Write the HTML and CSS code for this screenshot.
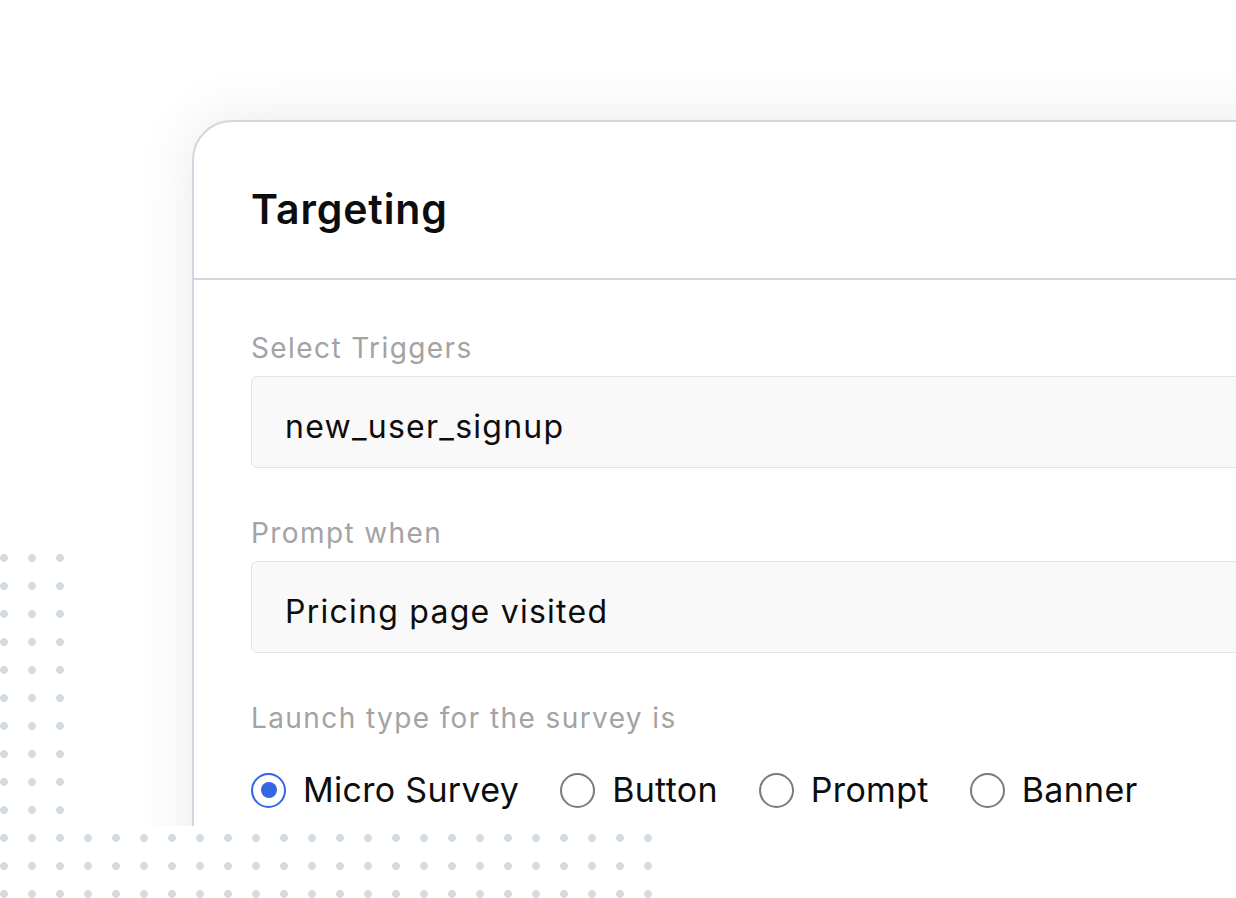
FILE: index.html
```html
<!DOCTYPE html>
<html lang="en">
<head>
<meta charset="utf-8">
<title>Targeting</title>
<link rel="stylesheet" href="styles.css">
</head>
<body>
<div class="stage">
  <div class="frame">
    <section class="card">
      <header class="card-head">
        <h1 class="title">Targeting</h1>
      </header>
      <div class="card-body">
        <div class="field">
          <div class="label">Select Triggers</div>
          <div class="input">new_user_signup</div>
        </div>
        <div class="field">
          <div class="label">Prompt when</div>
          <div class="input">Pricing page visited</div>
        </div>
        <div class="field">
          <div class="label">Launch type for the survey is</div>
          <div class="radios">
            <label class="radio"><span class="dot on"></span><span class="rtext">Micro Survey</span></label>
            <label class="radio"><span class="dot"></span><span class="rtext">Button</span></label>
            <label class="radio"><span class="dot"></span><span class="rtext">Prompt</span></label>
            <label class="radio"><span class="dot"></span><span class="rtext">Banner</span></label>
          </div>
        </div>
      </div>
    </section>
  </div>
  <div class="dots dots-left"></div>
  <div class="dots dots-bottom"></div>
</div>
</body>
</html>
```

FILE: styles.css
```css
* { box-sizing: border-box; }
html, body { margin: 0; padding: 0; background: #ffffff; }
body {
  font-family: Inter, "Noto Sans", "Liberation Sans", sans-serif;
  color: #111111;
  width: 1236px;
  height: 898px;
  overflow: hidden;
}
.stage { position: relative; width: 1236px; height: 898px; }
.frame {
  height: 826px;
  overflow: hidden;
  padding: 120px 0 0 192px;
}
.card {
  width: 1200px;
  height: 900px;
  background: #ffffff;
  border: 2px solid #d3d6e2;
  border-radius: 40px 0 0 0;
  box-shadow: 0 0 60px rgba(0, 0, 0, 0.09);
}
.card-head {
  height: 158px;
  border-bottom: 2px solid #d3d6e2;
  padding-left: 57px;
  display: flex;
  align-items: center;
}
.title {
  margin: 0;
  font-size: 41px;
  font-weight: 600;
  letter-spacing: 0.9px;
  color: #0d0d0d;
  padding-top: 18px;
}
.card-body {
  padding: 50px 0 0 57px;
  display: flex;
  flex-direction: column;
  gap: 47px;
}
.field { display: flex; flex-direction: column; gap: 10px; }
.label {
  font-size: 28px;
  line-height: 36px;
  letter-spacing: 1.4px;
  color: #a3a3a3;
}
.input {
  height: 92px;
  width: 1100px;
  background: #f9f9f9;
  border: 1px solid #e4e4e4;
  border-radius: 6px;
  padding: 8px 0 0 33px;
  display: flex;
  align-items: center;
  font-size: 32px;
  letter-spacing: 1.25px;
  color: #0d0d0d;
}
.radios {
  display: flex;
  align-items: center;
  gap: 41px;
  margin-top: 24px;
}
.radio {
  display: flex;
  align-items: center;
  gap: 17px;
  font-size: 34px;
  line-height: 40px;
  letter-spacing: 0.3px;
  color: #0d0d0d;
}
.dot {
  width: 35px;
  height: 35px;
  border-radius: 50%;
  border: 2px solid #7b7b7b;
  display: flex;
  align-items: center;
  justify-content: center;
  flex: none;
}
.dot.on { border-color: #3466df; }
.dot.on::after {
  content: "";
  width: 16px;
  height: 16px;
  border-radius: 50%;
  background: #3466df;
}
.dots {
  position: absolute;
  background-image: radial-gradient(circle at 14px 14px, #d3dbe3 3.6px, transparent 4.3px);
  background-size: 28px 28px;
}
.dots-left { left: -10px; top: 544px; width: 84px; height: 280px; }
.dots-bottom { left: -10px; top: 824px; width: 672px; height: 84px; }
```
